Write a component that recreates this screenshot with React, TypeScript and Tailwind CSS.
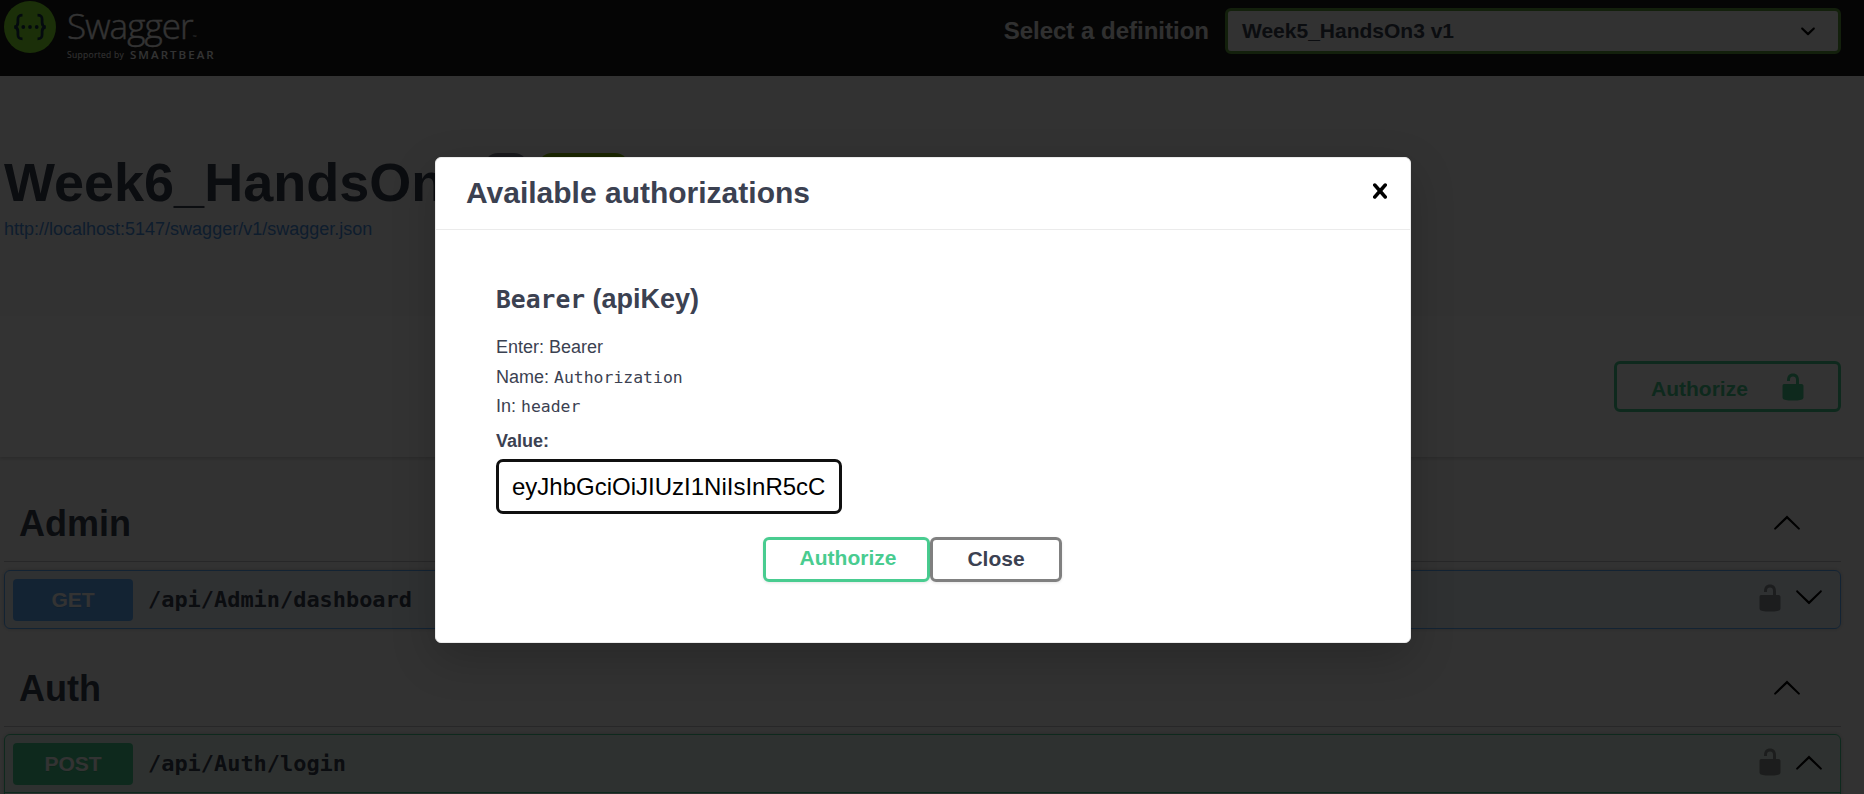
import React from "react";

const SANS = "font-['Liberation_Sans',Arial,sans-serif]";
const MONO = "font-['DejaVu_Sans_Mono',monospace]";

const ARROW_UP =
  "M17.418 14.908c.272.268.709.268.979 0s.271-.701 0-.969l-7.908-7.83c-.27-.268-.707-.268-.979 0l-7.908 7.83c-.27.268-.27.701 0 .969.271.268.709.268.979 0L10 7.767l7.418 7.141z";
const UNLOCKED =
  "M15.8 8H14V5.6C14 2.703 12.665 1 10 1 7.334 1 6 2.703 6 5.6V6h2v-.801C8 3.754 8.797 3 10 3c1.203 0 2 .754 2 2.199V8H4c-.553 0-1 .646-1 1.199V17c0 .549.428 1.139.951 1.307l1.197.387C5.672 18.861 6.55 19 7.1 19h5.8c.549 0 1.428-.139 1.951-.307l1.196-.387c.524-.167.953-.757.953-1.306V9.199C17 8.646 16.352 8 15.8 8z";
const CLOSE =
  "M14.348 14.849c-.469.469-1.229.469-1.697 0L10 11.819l-2.651 3.029c-.469.469-1.229.469-1.697 0-.469-.469-.469-1.229 0-1.697l2.758-3.15-2.759-3.152c-.469-.469-.469-1.228 0-1.697.469-.469 1.228-.469 1.697 0L10 8.183l2.651-3.031c.469-.469 1.228-.469 1.697 0 .469.469.469 1.229 0 1.697l-2.758 3.152 2.758 3.15c.469.469.469 1.229 0 1.698z";
const SELECT_ARROW =
  "M13.418 7.859c.271-.268.709-.268.978 0 .27.268.272.701 0 .969l-3.908 3.83c-.27.268-.707.268-.979 0l-3.908-3.83c-.27-.267-.27-.701 0-.969.271-.268.709-.268.978 0L10 11l3.418-3.141z";

function Icon({ d, className = "" }: { d: string; className?: string }) {
  return (
    <svg viewBox="0 0 20 20" className={`size-[30px] shrink-0 ${className}`} fill="currentColor">
      <path d={d} />
    </svg>
  );
}

function Logo() {
  return (
    <div className="flex items-start font-['Open_Sans',sans-serif] text-white">
      <svg viewBox="0 0 52 52" className="mt-[1px] size-[52px]">
        <circle cx="26" cy="26" r="26" fill="#85ea2d" />
        <g fill="none" stroke="#173647" strokeWidth="2.8">
          <path d="M18.5 14.2c-3.600 0-4.600 1-4.600 4.200v3.200c0 3-.9 4.100-3.600 4.400 2.700.3 3.600 1.400 3.600 4.400v3.200c0 3.200 1 4.200 4.600 4.200" />
          <path d="M33.500 14.200c3.600 0 4.600 1 4.600 4.200v3.200c0 3 .9 4.100 3.600 4.400-2.700.3-3.600 1.400-3.600 4.400v3.200c0 3.200-1 4.200-4.600 4.200" />
        </g>
        <g fill="#173647">
          <circle cx="19.300" cy="26" r="1.900" />
          <circle cx="26" cy="26" r="1.900" />
          <circle cx="32.700" cy="26" r="1.900" />
        </g>
      </svg>
      <div className="ml-[11px] flex flex-col">
        <div className="flex h-[49px] items-end">
          <span className="text-[35px] font-light leading-[47px] tracking-[-0.9px] [-webkit-text-stroke:0.4px_white]">Swagger</span>
          <span className="mb-[9px] text-[5px] leading-[6px]">™</span>
        </div>
        <div className="flex h-[11px] items-center whitespace-nowrap leading-[11px]">
          <span className="w-[63px] text-[8.5px] tracking-[0.3px]">Supported by</span>
          <span className="text-[11.5px] font-semibold tracking-[2.050px]">SMARTBEAR</span>
        </div>
      </div>
    </div>
  );
}

function TagHeading({ name }: { name: string }) {
  return (
    <div className="flex h-[77px] items-center justify-between border-b border-[rgba(59,65,81,0.3)] pl-[15px] pr-[39px]">
      <h3 className="mt-[2px] text-[36px] font-bold leading-[54px]">{name}</h3>
      <Icon d={ARROW_UP} className="mb-[2px] text-black" />
    </div>
  );
}

interface OperationProps {
  method: string;
  path: string;
  open?: boolean;
  blockClass: string;
  badgeClass: string;
}

function Operation({ method, path, open = false, blockClass, badgeClass }: OperationProps) {
  return (
    <div className={`rounded-[6px] border shadow-[0_0_4px_rgba(0,0,0,0.19)] ${blockClass}`}>
      <div className="flex h-[57px] items-center pl-[8px] pr-[16px]">
        <span
          className={`w-[120px] rounded-[4px] text-center text-[21px] font-bold leading-[42px] text-white [text-shadow:0_1px_0_rgba(0,0,0,0.1)] ${badgeClass}`}
        >
          {method}
        </span>
        <span className={`ml-[15px] mt-px grow text-[21.93px] font-bold leading-[30px] ${MONO}`}>{path}</span>
        <Icon d={UNLOCKED} className="mb-[4px] mr-[9px] text-black/40" />
        <Icon d={ARROW_UP} className={open ? "mb-[3px] text-black" : "mb-[3px] rotate-180 text-black"} />
      </div>
      {open && <div className="h-[120px] border-t border-[#49cc90]" />}
    </div>
  );
}

function AuthorizationDialog() {
  return (
    <div className="mt-[157px] h-[486px] w-[976px] rounded-[6px] border border-[#ebebeb] bg-white shadow-[0_15px_45px_rgba(0,0,0,0.2)]">
      <div className="flex h-[72px] items-center justify-between border-b border-[#ebebeb] pl-[30px] pr-[15px]">
        <h3 className="mb-[2px] text-[30px] font-bold leading-[36px]">Available authorizations</h3>
        <Icon d={CLOSE} className="mb-[6px] text-black" />
      </div>
      <div className="pl-[60px] pt-[51px]">
        <h4 className="h-[36px] text-[27px] font-bold leading-[36px]">
          <span className={`text-[24.67px] ${MONO}`}>Bearer</span> (apiKey)
        </h4>
        <div className="mt-[15px] text-[18px]">
          <p className="h-[30px] leading-[30px]">Enter: Bearer</p>
          <p className="h-[29px] leading-[30px]">
            Name: <span className={`text-[16.45px] ${MONO}`}>Authorization</span>
          </p>
          <p className="h-[29px] leading-[30px]">
            In: <span className={`text-[16.45px] ${MONO}`}>header</span>
          </p>
          <p className="mt-[7px] h-[28px] font-bold leading-[28px]">Value:</p>
        </div>
        <div className="mt-[4px] flex h-[55px] w-[346px] items-center overflow-hidden rounded-[7px] border-[3px] border-[#101010] px-[13px] text-[24px] text-black">
          eyJhbGciOiJIUzI1NiIsInR5cC
        </div>
      </div>
      <div className="ml-[327px] mt-[23px] flex text-[21px] font-bold">
        <button className="h-[45px] w-[167px] rounded-[6px] border-[3px] border-[#49cc90] pb-[4px] pl-[3px] leading-[35px] text-[#49cc90] shadow-[0_1px_3px_rgba(0,0,0,0.1)]">
          Authorize
        </button>
        <button className="h-[45px] w-[132px] rounded-[6px] border-[3px] border-[#808080] pb-[2px] leading-[37px] shadow-[0_1px_3px_rgba(0,0,0,0.1)]">
          Close
        </button>
      </div>
    </div>
  );
}

export default function App() {
  return (
    <div className={`relative h-[794px] w-[1864px] overflow-hidden bg-[#fafafa] text-[#3b4151] ${SANS}`}>
      <header className="flex h-[76px] items-start justify-between bg-[#1b1b1b] pl-[4px] pr-[23px]">
        <Logo />
        <div className="mt-[8px] flex items-center">
          <span className="mr-[16px] text-[24px] font-bold text-[#f0f0f0]">Select a definition</span>
          <div className="flex h-[46px] w-[616px] items-center justify-between rounded-[6px] border-[3px] border-[#62a03f] bg-[#f7f7f7] pl-[14px] pr-[15px] text-[21px] font-bold">
            Week5_HandsOn3 v1
            <Icon d={SELECT_ARROW} className="text-black" />
          </div>
        </div>
      </header>

      <section className="h-[240px] pl-[4px] pt-[75px]">
        <div className="flex items-start">
          <h2 className="text-[54px] font-bold leading-[62px]">Week6_HandsOn3</h2>
          <span className="ml-[10px] mt-[2px] h-[28px] w-[44px] rounded-[14px] bg-[#7d8492]" />
          <span className="ml-[10px] mt-[2px] h-[28px] w-[91px] rounded-[14px] bg-[#89bf04]" />
        </div>
        <p className="mt-[5px] text-[18px] leading-[22px] text-[#4990e2]">
          http://localhost:5147/swagger/v1/swagger.json
        </p>
      </section>

      <section className="flex h-[141px] items-start justify-end bg-white pr-[23px] pt-[45px] shadow-[0_2px_3px_rgba(0,0,0,0.15)]">
        <button className="flex h-[51px] w-[227px] items-center rounded-[6px] border-[3px] border-[#49cc90] pl-[34px] text-[21px] font-bold leading-[24px] text-[#49cc90]">
          <span className="mt-[5px]">Authorize</span>
          <Icon d={UNLOCKED} className="ml-[30px]" />
        </button>
      </section>

      <main className="pl-[4px] pr-[23px] pt-[28px]">
        <TagHeading name="Admin" />
        <div className="mb-[21px] mt-[8px]">
          <Operation
            method="GET"
            path="/api/Admin/dashboard"
            blockClass="border-[#61affe] bg-[rgba(97,175,254,0.1)]"
            badgeClass="bg-[#61affe]"
          />
        </div>
        <TagHeading name="Auth" />
        <div className="mt-[7px]">
          <Operation
            method="POST"
            path="/api/Auth/login"
            open
            blockClass="border-[#49cc90] bg-[rgba(73,204,144,0.1)]"
            badgeClass="bg-[#49cc90]"
          />
        </div>
      </main>

      <div className="absolute inset-0 flex items-start justify-center bg-black/80 pr-[18px]">
        <AuthorizationDialog />
      </div>
    </div>
  );
}
